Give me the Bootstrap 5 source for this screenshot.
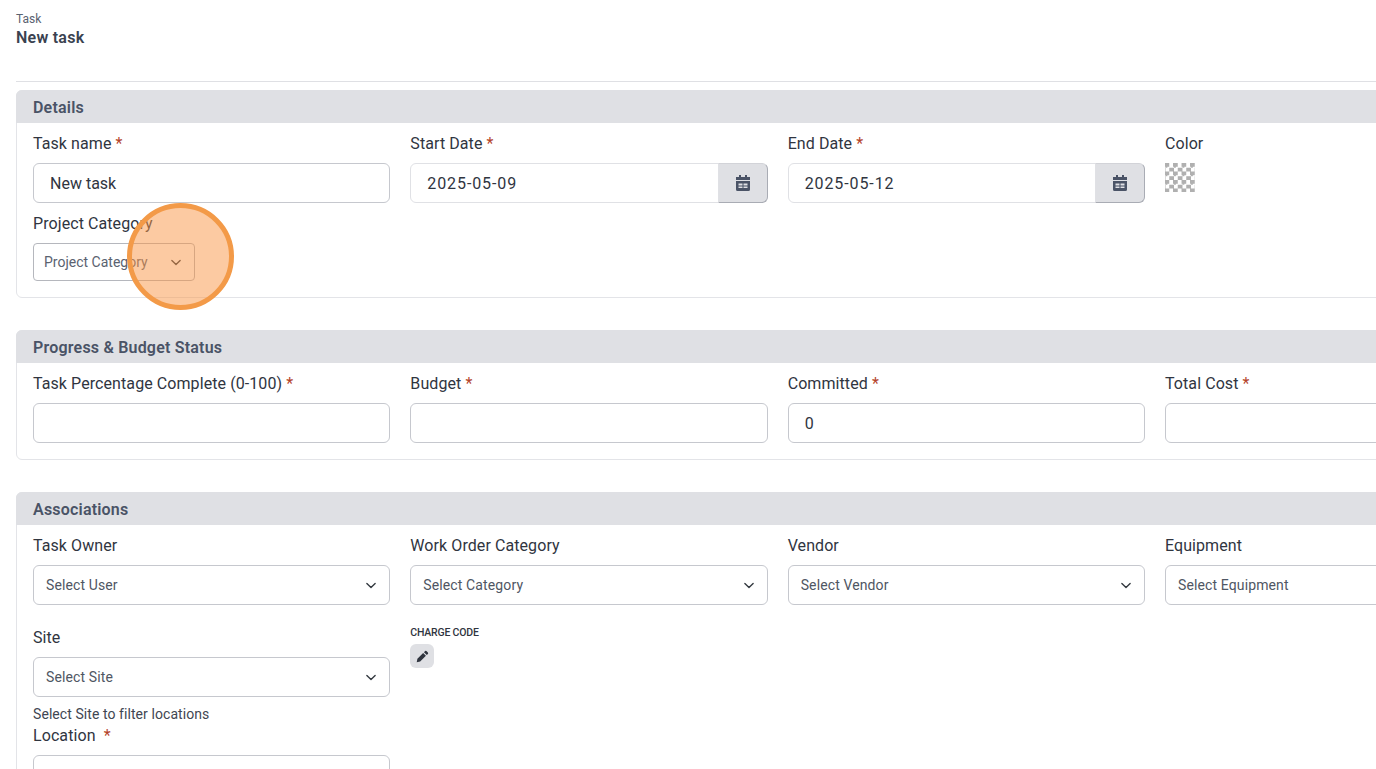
<!DOCTYPE html>
<html lang="en">
<head>
    <meta charset="UTF-8">
    <meta name="viewport" content="width=device-width, initial-scale=1.0">
    <title>New task</title>
    <link rel="stylesheet" href="https://cdn.jsdelivr.net/npm/bootstrap@5.3.3/dist/css/bootstrap.min.css">
    <style>
        html, body { height: 769px; overflow: hidden; }
        body { font-family: "Roboto", "Liberation Sans", sans-serif; color: #30353f; position: relative; background: #fff; }
        .task-page { width: 1560px; padding: 11px 0 0 16px; }
        .crumb-text { font-size: 12px; line-height: 16px; color: #5a6270; }
        .page-title { font-size: 16px; line-height: 22px; font-weight: 600; color: #3a4250; margin: 0; letter-spacing: .25px; }
        .title-rule { margin: 32px 0 8px; border-top: 1px solid #dfe0e4; opacity: 1; }
        .form-card { border: 1px solid #e3e4e8; border-radius: 6px; margin-bottom: 32px; width: 1544px; }
        .form-card .card-header { background: #dfe0e4; border: 0; height: 33px; margin: -1px -1px 0; padding: 0 17px; font-size: 16px; line-height: 35px; font-weight: 600; color: #4a5366; border-radius: 6px 6px 0 0; letter-spacing: .2px; }
        .form-card .card-body { padding: 8px 16px 16px; }
        .field-row { --bs-gutter-x: 20px; --bs-gutter-y: 0; width: 1530px; }
        .field-row > div { width: 377.33px; flex: 0 0 auto; }
        .field-label { display: block; font-size: 16px; line-height: 24px; padding-top: 1px; margin-bottom: 7px; color: #30353f; letter-spacing: .08px; }
        .req { color: #b4432a; }
        .form-control.field-input { height: 40px; border-color: #c6c8ce; border-radius: 6px; padding: 0 16px; font-size: 16px; color: #30353f; }
        .form-select.field-select { height: 40px; border-color: #c6c8ce; border-radius: 6px; padding: 0 36px 0 12px; font-size: 14px; letter-spacing: .12px; color: #4f5663; background-position: right 11px center; background-size: 14px 11px; }
        .date-group .form-control { height: 40px; border-color: #e0e1e5; border-radius: 6px 0 0 6px; padding: 0 16px; font-size: 16px; letter-spacing: .9px; color: #30353f; }
        .date-btn { width: 50px; height: 40px; display: flex; align-items: center; justify-content: center; background: #dfe0e4; border: 1px solid #a9acb4; border-left: 0; border-top-color: #d2d3d8; border-radius: 0 6px 6px 0; padding: 0 0 0 2px; }
        .color-swatch { width: 30px; height: 29px; margin-top: 1px; background: repeating-conic-gradient(#b0b0b0 0 25%, #fff 0 50%) 4.250px 0 / 8.500px 8.500px; }
        .mb-field { margin-bottom: 8px; }
        .mb-wide { margin-bottom: 20px; }
        .cat-select.form-select { width: 162px; height: 38px; border-color: #b5b7bd; border-radius: 4px; padding: 0 30px 0 10px; font-size: 14px; color: #5a6270; background-position: right 11px center; background-size: 14px 11px; }
        .help-text { font-size: 14px; line-height: 18px; margin-top: 8px; color: #3f4652; letter-spacing: .07px; }
        .code-label { font-size: 10.500px; line-height: 14px; font-weight: 500; color: #30353f; padding-top: 1px; letter-spacing: -.2px; }
        .code-btn { width: 24px; height: 24px; margin-top: 4px; padding: 0; border: 0; border-radius: 6px; background: #dfe0e4; display: flex; align-items: center; justify-content: center; }
        .click-mark { position: absolute; left: 127px; top: 203px; width: 107px; height: 107px; border-radius: 50%; border: 5px solid #f39a48; background: rgba(249, 150, 70, .5); }
    </style>
</head>
<body>
<div class="task-page">
    <div class="crumb-text">Task</div>
    <h1 class="page-title">New task</h1>
    <hr class="title-rule">

    <div class="card form-card">
        <div class="card-header">Details</div>
        <div class="card-body">
            <div class="row field-row">
                <div class="mb-field">
                    <label class="field-label">Task name <span class="req">*</span></label>
                    <input class="form-control field-input" value="New task">
                </div>
                <div class="mb-field">
                    <label class="field-label">Start Date <span class="req">*</span></label>
                    <div class="input-group date-group">
                        <input class="form-control" value="2025-05-09">
                        <button class="date-btn" type="button">
                            <svg width="14" height="16" viewBox="0 0 14 16"><path fill="#4a5366" d="M3 0h2v2h4V0h2v2h3v3H0V2h3zM0 6h14v8.500a1.500 1.500 0 0 1-1.500 1.500h-11A1.500 1.500 0 0 1 0 14.500zm2.500 2.500v2h4v-2zm5 0v2h4v-2zm-5 3v1.500h4V11.500zm5 0v1.500h4V11.500z" fill-rule="evenodd"/></svg>
                        </button>
                    </div>
                </div>
                <div class="mb-field">
                    <label class="field-label">End Date <span class="req">*</span></label>
                    <div class="input-group date-group">
                        <input class="form-control" value="2025-05-12">
                        <button class="date-btn" type="button">
                            <svg width="14" height="16" viewBox="0 0 14 16"><path fill="#4a5366" d="M3 0h2v2h4V0h2v2h3v3H0V2h3zM0 6h14v8.500a1.500 1.500 0 0 1-1.500 1.500h-11A1.500 1.500 0 0 1 0 14.500zm2.500 2.500v2h4v-2zm5 0v2h4v-2zm-5 3v1.500h4V11.500zm5 0v1.500h4V11.500z" fill-rule="evenodd"/></svg>
                        </button>
                    </div>
                </div>
                <div class="mb-field">
                    <label class="field-label">Color</label>
                    <div class="color-swatch"></div>
                </div>
            </div>
            <div class="row field-row">
                <div>
                    <label class="field-label">Project Category</label>
                    <select class="form-select cat-select"><option>Project Category</option></select>
                </div>
            </div>
        </div>
    </div>

    <div class="card form-card">
        <div class="card-header">Progress &amp; Budget Status</div>
        <div class="card-body">
            <div class="row field-row">
                <div>
                    <label class="field-label">Task Percentage Complete (0-100) <span class="req">*</span></label>
                    <input class="form-control field-input">
                </div>
                <div>
                    <label class="field-label">Budget <span class="req">*</span></label>
                    <input class="form-control field-input">
                </div>
                <div>
                    <label class="field-label">Committed <span class="req">*</span></label>
                    <input class="form-control field-input" value="0">
                </div>
                <div>
                    <label class="field-label">Total Cost <span class="req">*</span></label>
                    <input class="form-control field-input">
                </div>
            </div>
        </div>
    </div>

    <div class="card form-card">
        <div class="card-header">Associations</div>
        <div class="card-body">
            <div class="row field-row">
                <div class="mb-wide">
                    <label class="field-label">Task Owner</label>
                    <select class="form-select field-select"><option>Select User</option></select>
                </div>
                <div class="mb-wide">
                    <label class="field-label">Work Order Category</label>
                    <select class="form-select field-select"><option>Select Category</option></select>
                </div>
                <div class="mb-wide">
                    <label class="field-label">Vendor</label>
                    <select class="form-select field-select"><option>Select Vendor</option></select>
                </div>
                <div class="mb-wide">
                    <label class="field-label">Equipment</label>
                    <select class="form-select field-select"><option>Select Equipment</option></select>
                </div>
            </div>
            <div class="row field-row">
                <div>
                    <label class="field-label">Site</label>
                    <select class="form-select field-select"><option>Select Site</option></select>
                    <div class="help-text">Select Site to filter locations</div>
                    <label class="field-label">Location &nbsp;<span class="req">*</span></label>
                    <select class="form-select field-select"><option></option></select>
                </div>
                <div>
                    <div class="code-label">CHARGE CODE</div>
                    <button class="code-btn" type="button">
                        <svg width="13" height="13" viewBox="0 0 14 14"><path fill="#30353f" d="M9.800 1.200a1 1 0 0 1 1.400 0l1.600 1.600a1 1 0 0 1 0 1.400l-1.200 1.200-3-3zM7.700 3.300l3 3-6.200 6.200-3.700.7.700-3.700z"/></svg>
                    </button>
                </div>
            </div>
        </div>
    </div>
</div>
<div class="click-mark"></div>
<script src="https://cdn.jsdelivr.net/npm/bootstrap@5.3.3/dist/js/bootstrap.bundle.min.js"></script>
</body>
</html>
